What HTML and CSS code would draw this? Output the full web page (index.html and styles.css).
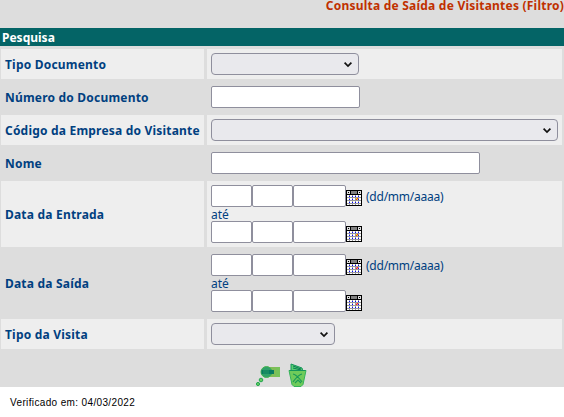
FILE: index.html
```html
<!DOCTYPE html>
<html lang="pt-BR">
<head>
<meta charset="utf-8">
<title>Consulta de Saída de Visitantes</title>
<link rel="stylesheet" href="styles.css">
</head>
<body>
<svg width="0" height="0" class="defs" aria-hidden="true">
  <defs>
    <symbol id="calendar" viewBox="0 0 16 16">
      <path d="M0 0h16v16H0z" fill="#000"/>
      <path d="M1 1h3v3H1zM12 1h3v3h-3z" fill="#ddd"/>
      <path d="M2 2h1v1H2zM13 2h1v1h-1z" fill="#000"/>
      <path d="M5 1h6v3H5z" fill="#808080"/>
      <path d="M1 5h14v10H1z" fill="#fff"/>
      <path d="M1 7h14v1H1zM1 10h14v1H1zM1 13h14v1H1zM3 5h1v10H3zM6 5h1v10H6zM9 5h1v10H9zM12 5h1v10h-1z" fill="#999"/>
      <path d="M3 6h1v1H3zM6 6h1v1H6zM9 6h1v1H9zM12 6h1v1h-1zM3 9h1v1H3zM6 9h1v1H6zM12 9h1v1h-1zM3 12h1v1H3zM6 12h1v1H6zM9 12h1v1H9zM12 12h1v1h-1z" fill="#00f"/>
      <path d="M10 8h2v2h-2z" fill="#f22"/>
      <path d="M10 8h1v1h-1zM11 9h1v1h-1z" class="mark"/>
    </symbol>
  </defs>
</svg>
<main class="panel">
  <h1 class="title">Consulta de Saída de Visitantes (Filtro)</h1>
  <h2 class="section">Pesquisa</h2>
  <form class="grid">
    <div class="row odd"><label class="name">Tipo Documento</label><div class="cell"><span class="select w-doc"><svg class="chevron" viewBox="0 0 8 5"><path d="M.6.6 4 4 7.4.6"/></svg></span></div></div>
    <div class="row"><label class="name">Número do Documento</label><div class="cell"><input class="w-num"></div></div>
    <div class="row odd"><label class="name">Código da Empresa do Visitante</label><div class="cell"><span class="select w-full"><svg class="chevron" viewBox="0 0 8 5"><path d="M.6.6 4 4 7.4.6"/></svg></span></div></div>
    <div class="row"><label class="name">Nome</label><div class="cell"><input class="w-name"></div></div>
    <div class="row odd"><label class="name">Data da Entrada</label><div class="cell entry">
      <div class="date"><input class="w-day"><input class="w-day"><input class="w-year"><svg class="cal"><use href="#calendar"/></svg><span class="hint">(dd/mm/aaaa)</span></div>
      <div class="until">até</div>
      <div class="date"><input class="w-day"><input class="w-day"><input class="w-year"><svg class="cal"><use href="#calendar"/></svg></div>
    </div></div>
    <div class="row"><label class="name">Data da Saída</label><div class="cell exit">
      <div class="date"><input class="w-day"><input class="w-day"><input class="w-year"><svg class="cal"><use href="#calendar"/></svg><span class="hint">(dd/mm/aaaa)</span></div>
      <div class="until">até</div>
      <div class="date"><input class="w-day"><input class="w-day"><input class="w-year"><svg class="cal"><use href="#calendar"/></svg></div>
    </div></div>
    <div class="row odd"><label class="name">Tipo da Visita</label><div class="cell"><span class="select w-visit"><svg class="chevron" viewBox="0 0 8 5"><path d="M.6.6 4 4 7.4.6"/></svg></span></div></div>
  </form>
  <div class="actions">
    <svg class="search" viewBox="0 0 25 22">
      <path d="M10 2h14v10H10z" fill="#80bd58"/>
      <path d="M20 2h4v10h-4z" fill="#76c35a"/>
      <circle cx="10.5" cy="7" r="5.5" fill="#2fa06a" stroke="#45b54e"/>
      <path d="M5.5 5H18v4H5.5z" fill="#087c60"/>
      <path d="M7 6h6M7 8h6" stroke="#279a65"/>
      <circle cx="5" cy="15" r="1.8" fill="#65cc62" stroke="#24a650"/>
      <circle cx="2" cy="19" r="1.6" fill="#65cc62" stroke="#24a650"/>
    </svg>
    <svg class="trash" viewBox="0 0 19 24">
      <path d="m3 1 11 4 1 4H3z" fill="#5bcf72" stroke="#14955a"/>
      <path d="m5 3 8 3M5 5l8 2" stroke="#087c54"/>
      <path d="M1 7.5h17l-3 14-2 2H6l-2-2z" fill="#6fcb5a" stroke="#35b35a"/>
      <path d="M1.5 7.5h16" stroke="#14955a"/>
      <path d="M5 11c4 1 6 4 9 8M14 11c-4 1-6 4-9 8M7 20l3-3 3 3" fill="none" stroke="#1b9a58" stroke-width="1.1"/>
    </svg>
  </div>
</main>
<footer class="checked">Verificado em: 04/03/2022</footer>
</body>
</html>
```
FILE: styles.css
```css
* { box-sizing: border-box; }
body {
  margin: 0;
  background: #fff;
  color: #004080;
  font: 12px/14px "Noto Sans", "DejaVu Sans", sans-serif;
  overflow: hidden;
}
.defs { display: block; width: 0; height: 0; }
.panel { height: 387px; background: #ddd; }
.title {
  margin: 0;
  height: 28px;
  text-align: right;
  color: #c03000;
  font-size: 12px;
  line-height: 12px;
  letter-spacing: .22px;
  white-space: nowrap;
}
.section {
  margin: 0;
  height: 18px;
  padding-left: 2px;
  background: #046466;
  color: #fff;
  font-size: 12px;
  line-height: 19px;
}
.grid { display: flex; flex-direction: column; gap: 3px; padding: 3px 2px 0 1px; }
.row { display: grid; grid-template-columns: 203px 355px; gap: 3px; }
.name, .cell { padding: 4px; }
.name {
  display: flex;
  align-items: center;
  padding-top: 6px;
  font-weight: bold;
  letter-spacing: .2px;
  white-space: nowrap;
}
.odd .name, .odd .cell { background: #eee; }
input {
  display: block;
  height: 22px;
  margin: 0;
  border: 1px solid #8f8f9d;
  border-radius: 2px;
  background: #fff;
}
.select {
  display: flex;
  align-items: center;
  justify-content: flex-end;
  height: 22px;
  padding-right: 6px;
  border: 1px solid #8f8f9d;
  border-radius: 4px;
  background: #e9e9ed;
}
.chevron { width: 8px; height: 5px; overflow: visible; fill: none; stroke: #111; stroke-width: 1.7; }
.w-doc { width: 148px; }
.w-num { width: 149px; }
.w-full { width: 347px; }
.w-name { width: 269px; }
.w-visit { width: 124px; }
.w-day { width: 41px; }
.w-year { width: 53px; }
.date { display: flex; height: 22px; }
.until { height: 14px; line-height: 16px; }
.cal { width: 16px; height: 16px; margin-top: 5px; shape-rendering: crispEdges; }
.hint { margin-left: 4px; line-height: 24px; letter-spacing: -.24px; }
.entry { --mark: #ff0; }
.exit { --mark: #f88; }
.mark { fill: var(--mark); }
.actions { display: flex; gap: 7px; padding: 14px 0 0 256px; }
.search { width: 25px; height: 22px; margin-top: 2px; }
.trash { width: 19px; height: 24px; }
.checked {
  padding: 9px 0 0 10px;
  color: #000;
  font: 10px/14px "Liberation Sans", Arial, sans-serif;
  letter-spacing: .36px;
}
```
